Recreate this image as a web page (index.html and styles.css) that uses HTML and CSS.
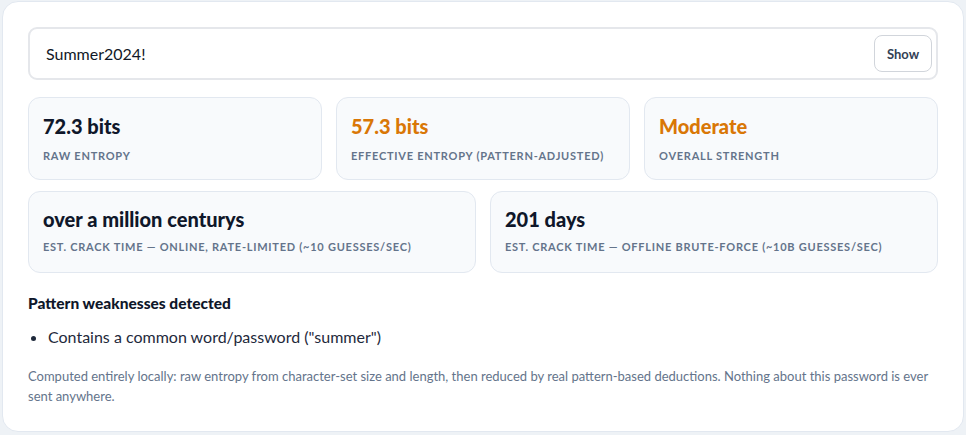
FILE: index.html
```html
<!DOCTYPE html>
<html lang="en">
<head>
<meta charset="utf-8">
<title>Password strength</title>
<link rel="stylesheet" href="styles.css">
</head>
<body>
<div class="panel">
  <div class="field">
    <span class="field-value">Summer2024!</span>
    <button class="show-btn">Show</button>
  </div>
  <div class="grid three">
    <div class="stat"><div class="stat-value">72.3 bits</div><div class="stat-label">Raw entropy</div></div>
    <div class="stat"><div class="stat-value warn">57.3 bits</div><div class="stat-label">Effective entropy (pattern-adjusted)</div></div>
    <div class="stat"><div class="stat-value warn">Moderate</div><div class="stat-label">Overall strength</div></div>
  </div>
  <div class="grid two">
    <div class="stat"><div class="stat-value">over a million centurys</div><div class="stat-label">Est. crack time — online, rate-limited (~10 guesses/sec)</div></div>
    <div class="stat"><div class="stat-value">201 days</div><div class="stat-label">Est. crack time — offline brute-force (~10B guesses/sec)</div></div>
  </div>
  <h3 class="weak-title">Pattern weaknesses detected</h3>
  <ul class="weak-list">
    <li>Contains a common word/password ("summer")</li>
  </ul>
  <p class="note">Computed entirely locally: raw entropy from character-set size and length, then reduced by real pattern-based deductions. Nothing about this password is ever sent anywhere.</p>
</div>
</body>
</html>
```
FILE: styles.css
```css
html, body {
  margin: 0;
  padding: 0;
}
body {
  background: #eef2f6;
  font-family: Lato, "Noto Sans", sans-serif;
  color: #0f172a;
  padding: 1px 2px 0 2px;
  height: 435px;
  box-sizing: border-box;
  overflow: hidden;
}
.panel {
  background: #ffffff;
  border: 1px solid #e2e8f0;
  border-radius: 16px;
  padding: 25px 25px 23px 25px;
  height: 431px;
  box-sizing: border-box;
}
.field {
  display: flex;
  align-items: center;
  justify-content: space-between;
  height: 53px;
  box-sizing: border-box;
  border: 2px solid #e5e7eb;
  border-radius: 9px;
  padding: 0 4px 0 16px;
}
.field-value {
  font-size: 16px;
  color: #111827;
}
.show-btn {
  font-family: inherit;
  font-size: 13px;
  font-weight: 700;
  color: #334155;
  background: #ffffff;
  border: 1px solid #d1d5db;
  border-radius: 8px;
  width: 58px;
  height: 37px;
  padding: 0;
}
.grid {
  display: grid;
  gap: 14px;
}
.three {
  grid-template-columns: repeat(3, 1fr);
  margin-top: 17px;
}
.two {
  grid-template-columns: repeat(2, 1fr);
  margin-top: 11px;
}
.stat {
  background: #f8fafc;
  border: 1px solid #e2e8f0;
  border-radius: 12px;
  padding: 14px 14px 14px 14px;
  height: 83px;
  box-sizing: border-box;
}
.two .stat {
  height: 82px;
  padding-top: 13px;
}
.stat-value {
  font-size: 20px;
  font-weight: 900;
  line-height: 28px;
  color: #0f172a;
}
.stat-value.warn {
  color: #d97706;
}
.stat-label {
  margin-top: 8px;
  font-size: 11px;
  line-height: 16px;
  font-weight: 700;
  text-transform: uppercase;
  letter-spacing: 0.75px;
  color: #64748b;
}
.two .stat-label {
  margin-top: 6px;
}
.weak-title {
  margin: 20px 0 0 0;
  font-size: 15.5px;
  line-height: 20px;
  font-weight: 900;
  color: #0f172a;
}
.weak-list {
  margin: 13px 0 0 0;
  padding-left: 20px;
  font-size: 16px;
  line-height: 22px;
  color: #1e293b;
}
.note {
  margin: 18px 0 0 0;
  font-size: 13px;
  line-height: 20px;
  color: #64748b;
}
```
